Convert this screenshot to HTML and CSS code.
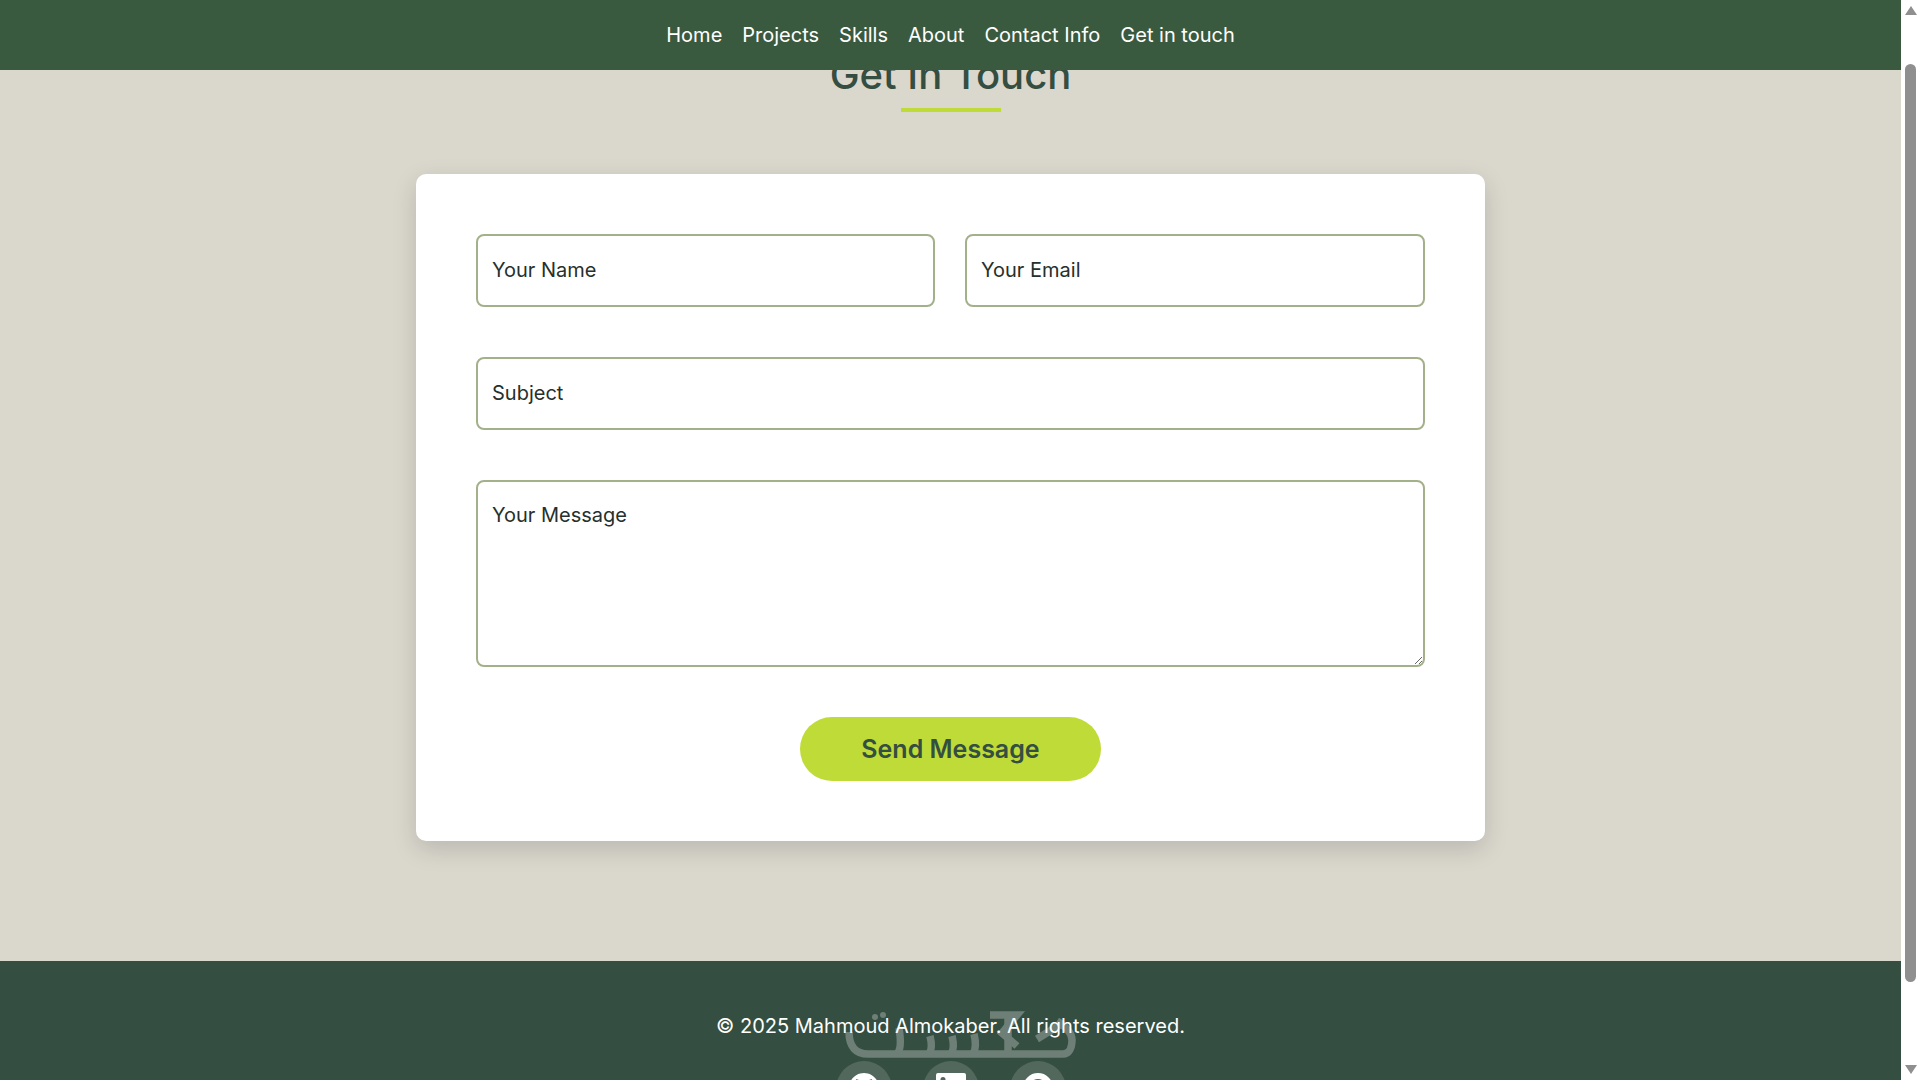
FILE: index.html
```html
<!DOCTYPE html>
<html lang="en">
<head>
  <meta charset="UTF-8" />
  <meta name="viewport" content="width=device-width, initial-scale=1.0"/>
  <title>Get In Touch</title>
  <link rel="stylesheet" href="styles.css">
</head>
<body>

  <nav class="navbar">
    <a href="#">Home</a>
    <a href="#">Projects</a>
    <a href="#">Skills</a>
    <a href="#">About</a>
    <a href="#">Contact Info</a>
    <a href="#">Get in touch</a>
  </nav>

  <main class="contact">
    <h2 class="section-title">Get In Touch</h2>

    <form class="contact-form">
      <div class="form-row">
        <input type="text" placeholder="Your Name">
        <input type="email" placeholder="Your Email">
      </div>
      <input type="text" placeholder="Subject">
      <textarea placeholder="Your Message"></textarea>
      <button type="button" class="send-btn">Send Message</button>
    </form>
  </main>

  <footer class="footer">
    <p>&copy; 2025 Mahmoud Almokaber. All rights reserved.</p>
    <div class="socials">
      <a href="#">
        <svg width="30" height="30" viewBox="0 0 16 16" fill="#fff"><path d="M8 0C3.58 0 0 3.58 0 8c0 3.54 2.29 6.53 5.47 7.59.4.07.55-.17.55-.38 0-.19-.01-.82-.01-1.49-2.01.37-2.53-.49-2.69-.94-.09-.23-.48-.94-.82-1.13-.28-.15-.68-.52-.01-.53.63-.01 1.08.58 1.23.82.72 1.21 1.87.87 2.33.66.07-.52.28-.87.51-1.07-1.78-.2-3.64-.89-3.64-3.95 0-.87.31-1.59.82-2.15-.08-.2-.36-1.02.08-2.12 0 0 .67-.21 2.2.82.64-.18 1.32-.27 2-.27.68 0 1.36.09 2 .27 1.53-1.04 2.2-.82 2.2-.82.44 1.1.16 1.92.08 2.12.51.56.82 1.28.82 2.15 0 3.07-1.87 3.75-3.65 3.95.29.25.54.73.54 1.48 0 1.07-.01 1.93-.01 2.2 0 .21.15.46.55.38A8.013 8.013 0 0016 8c0-4.42-3.58-8-8-8z"/></svg>
      </a>
      <a href="#">
        <svg width="30" height="30" viewBox="0 0 30 30" fill="#fff"><path fill-rule="evenodd" d="M2 0h26a2 2 0 012 2v26a2 2 0 01-2 2H2a2 2 0 01-2-2V2a2 2 0 012-2zM7 4a2.5 2.5 0 100 5 2.5 2.5 0 000-5zM5 11v14h4V11zM12 11v14h4v-7c0-4 5-4 5 0v7h4v-8c0-7-7-7-9-4v-2z"/></svg>
      </a>
      <a href="#">
        <svg width="30" height="30" viewBox="0 0 30 30" fill="#fff"><path fill-rule="evenodd" d="M15 0a15 15 0 100 30 15 15 0 000-30zM15 6a9 9 0 100 18 9 9 0 000-18z"/></svg>
      </a>
    </div>

    <!-- watermark logo -->
    <svg class="watermark" width="232" height="50" viewBox="0 0 232 50" fill="none" stroke="#fff" stroke-width="7.5">
      <path d="M4 22c0 15 7 22 19 22h195c6 0 9-6 9-14 0-8-7-14-15-19"/>
      <path d="M52 44c4-4 4-14 2-26M84 44c3-4 3-10 1-18M106 44c3-4 3-10 1-18M128 44c3-5 3-12 1-20"/>
      <path d="M145 5h27l-15 18 15 13"/>
      <path d="M163 5v39"/>
      <path d="M192 29l24-15"/>
      <circle cx="30" cy="7" r="3" fill="#fff" stroke="none"/>
      <circle cx="38" cy="5" r="3" fill="#fff" stroke="none"/>
    </svg>
  </footer>

  <!-- scrollbar drawn by hand since the page is a fixed shot -->
  <div class="scrollbar">
    <span class="arrow-up"></span>
    <span class="thumb"></span>
    <span class="arrow-down"></span>
  </div>

</body>
</html>
```

FILE: styles.css
```css
html, body {
  margin: 0;
  height: 1080px;
  overflow: hidden;
}
body {
  font-family: 'Inter', sans-serif;
  background: #dad7cd;
  color: #344e41;
  width: 1901px;
  position: relative;
}
.navbar {
  position: absolute;
  top: 0;
  left: 0;
  right: 0;
  z-index: 5;
  height: 70px;
  background: #3a5a40;
  display: flex;
  justify-content: center;
  align-items: center;
  gap: 20px;
}
.navbar a {
  color: #fff;
  font-size: 20px;
  text-decoration: none;
}
.contact {
  padding: 51px 0 120px;
  display: flex;
  flex-direction: column;
  align-items: center;
}
.section-title {
  margin: 0 0 75px;
  font-size: 40px;
  line-height: 48px;
  font-weight: 500;
  color: #344e41;
  position: relative;
}
.section-title::after {
  content: "";
  position: absolute;
  left: 50%;
  bottom: -13px;
  width: 100px;
  height: 4px;
  margin-left: -49.5px;
  background: #bfdb38;
}
.contact-form {
  box-sizing: border-box;
  width: 1069px;
  padding: 60px;
  background: #fff;
  border-radius: 10px;
  box-shadow: 0 8px 24px rgba(0,0,0,0.15);
  display: flex;
  flex-direction: column;
  gap: 50px;
}
.form-row {
  display: grid;
  grid-template-columns: 459px 460px;
  gap: 30px;
}
input, textarea {
  box-sizing: border-box;
  width: 100%;
  padding: 14px 14px 15px;
  font-family: 'Inter', sans-serif;
  font-size: 20px;
  border: 2px solid #a3b18a;
  border-radius: 8px;
  background: #fff;
  display: block;
}
input {
  height: 73px;
}
textarea {
  height: 187px;
  padding-top: 21px;
  resize: vertical;
}
input::placeholder, textarea::placeholder {
  color: #26302c;
  opacity: 1;
}
.send-btn {
  align-self: center;
  width: 301px;
  height: 64px;
  border: none;
  border-radius: 32px;
  background: #bfdb38;
  color: #344e41;
  font-family: 'Inter', sans-serif;
  font-size: 25px;
  font-weight: 600;
}
.footer {
  height: 160px;
  background: #344e41;
  color: #fff;
  position: relative;
  text-align: center;
  padding-top: 50px;
  box-sizing: border-box;
}
.footer p {
  margin: 0;
  font-size: 20px;
  line-height: 30px;
}
.socials {
  margin-top: 20px;
  display: flex;
  justify-content: center;
  gap: 31px;
}
.socials a {
  width: 56px;
  height: 56px;
  border-radius: 50%;
  background: rgba(255,255,255,0.15);
  display: flex;
  justify-content: center;
  padding-top: 12px;
  box-sizing: border-box;
}
.watermark {
  position: absolute;
  left: 845px;
  top: 49px;
  opacity: 0.28;
}
.scrollbar {
  position: fixed;
  top: 0;
  right: 0;
  width: 19px;
  height: 1080px;
  background: #fff;
}
.thumb {
  position: absolute;
  left: 4px;
  top: 64px;
  width: 11px;
  height: 918px;
  border-radius: 6px;
  background: #8f8f8f;
}
.arrow-up, .arrow-down {
  position: absolute;
  left: 4px;
  width: 0;
  height: 0;
  border-left: 6px solid transparent;
  border-right: 6px solid transparent;
}
.arrow-up {
  top: 6px;
  border-bottom: 9px solid #8f8f8f;
}
.arrow-down {
  bottom: 6px;
  border-top: 9px solid #8f8f8f;
}
```
